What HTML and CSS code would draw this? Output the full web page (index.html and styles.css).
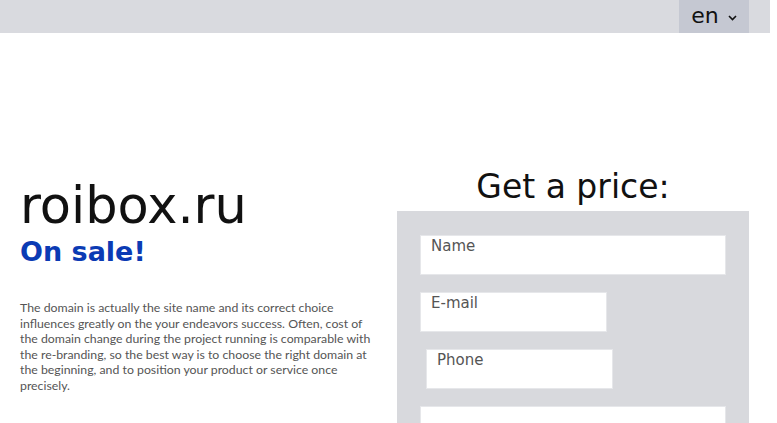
FILE: index.html
```html
<!DOCTYPE html>
<html lang="en">
<head>
    <meta charset="UTF-8">
    <meta name="viewport" content="width=device-width, initial-scale=1.0">
    <title>roibox.ru is on sale</title>
    <link rel="stylesheet" href="styles.css">
</head>
<body>
    <header class="topbar">
        <div class="lang">
            <span>en</span>
            <svg class="chevron" width="9" height="6" viewBox="0 0 9 6"><path d="M1 1 L4.5 4.5 L8 1" fill="none" stroke="#111" stroke-width="1.6"/></svg>
        </div>
    </header>
    <main class="wrap">
        <section class="about">
            <h1>roibox.ru</h1>
            <p class="sale">On sale!</p>
            <p class="text">The domain is actually the site name and its correct choice<br>
                influences greatly on the your endeavors success. Often, cost of<br>
                the domain change during the project running is comparable with<br>
                the re-branding, so the best way is to choose the right domain at<br>
                the beginning, and to position your product or service once<br>
                precisely.</p>
        </section>
        <section class="order">
            <h2>Get a price:</h2>
            <form class="price-form">
                <input type="text" class="wide" placeholder="Name">
                <input type="email" class="short" placeholder="E-mail">
                <input type="tel" class="short shifted" placeholder="Phone">
                <input type="text" class="wide" placeholder="">
            </form>
        </section>
    </main>
</body>
</html>
```
FILE: styles.css
```css
body {
    margin: 0;
    padding: 0;
    background-color: #ffffff;
    font-family: "DejaVu Sans", sans-serif;
    color: #111;
    overflow: hidden;
}
.topbar {
    width: 770px;
    height: 33px;
    background-color: #d9dadf;
    display: flex;
    justify-content: flex-end;
    padding-right: 21px;
    box-sizing: border-box;
}
.lang {
    width: 70px;
    height: 33px;
    background-color: #c5c8d2;
    display: flex;
    align-items: center;
    justify-content: center;
    gap: 9px;
    font-size: 22px;
    line-height: 33px;
}
.lang span {
    margin-top: -2px;
}
.chevron {
    margin-top: 2px;
}
.wrap {
    width: 770px;
    display: flex;
}
.about {
    width: 357px;
    padding-left: 20px;
    padding-top: 144px;
}
.about h1 {
    margin: 0;
    font-size: 51px;
    font-weight: normal;
    line-height: 57px;
    color: #111;
}
.sale {
    margin: 3px 0 0;
    font-size: 27px;
    line-height: 30px;
    font-weight: bold;
    color: #0b3bb4;
}
.text {
    margin: 33px 0 0;
    font-family: Lato, sans-serif;
    font-size: 12.3px;
    line-height: 15.6px;
    color: #555;
}
.order {
    margin-left: 20px;
    width: 352px;
    padding-top: 134px;
}
.order h2 {
    margin: 0 0 5px;
    font-size: 33px;
    line-height: 39px;
    font-weight: normal;
    text-align: center;
}
.price-form {
    background-color: #d8d9dd;
    padding: 24px 23px 40px;
    display: flex;
    flex-direction: column;
    align-items: flex-start;
    gap: 17px;
}
.price-form input {
    box-sizing: border-box;
    height: 40px;
    padding: 1px 10px 20px;
    border: 1px solid #e6e7ea;
    background-color: #fff;
    font-family: "DejaVu Sans", sans-serif;
    font-size: 15px;
    color: #555;
    outline: none;
}
.price-form input::placeholder {
    color: #555;
}
.price-form .wide {
    width: 306px;
}
.price-form .short {
    width: 187px;
}
.price-form .shifted {
    margin-left: 6px;
}
```
